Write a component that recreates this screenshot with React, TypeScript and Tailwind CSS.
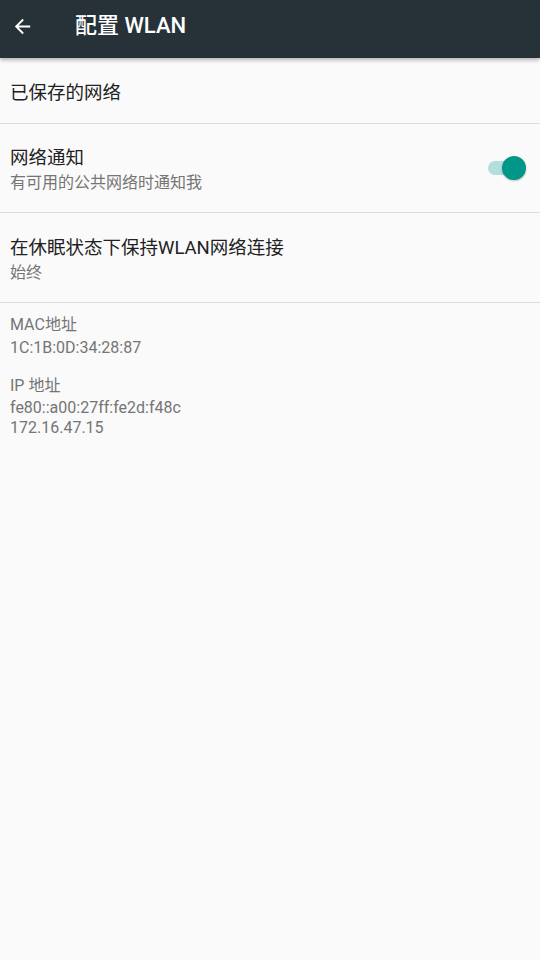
import React from "react";

const font = { fontFamily: '"Roboto", "Noto Sans CJK SC", sans-serif' };

export default function App() {
  return (
    <div className="w-[540px] h-[960px] bg-[#fafafa] flex flex-col" style={font}>
      <div className="h-[58px] bg-[#263238] flex items-center pb-[6px] shadow-[0_2px_4px_rgba(0,0,0,0.3)] relative z-10">
        <div className="w-[75px] flex items-center pl-[11px]">
          <svg width="23" height="23" viewBox="0 0 24 24">
            <path d="M20 11H7.83l5.59-5.59L12 4l-8 8 8 8 1.41-1.41L7.83 13H20v-2z" fill="#ffffff" />
          </svg>
        </div>
        <div className="text-white text-[22px] font-medium leading-none">配置 WLAN</div>
      </div>
      <div className="h-[66px] flex items-center px-[10px] border-b border-[#dcdcdc]">
        <div className="text-[18.5px] text-[#212121] pt-[6px]">已保存的网络</div>
      </div>
      <div className="h-[89px] flex items-center justify-between pl-[10px] pr-[16px] border-b border-[#dcdcdc]">
        <div className="flex flex-col pt-[4px]">
          <div className="text-[18.5px] leading-[26px] text-[#212121]">网络通知</div>
          <div className="text-[16px] leading-[24px] text-[#757575]">有可用的公共网络时通知我</div>
        </div>
        <div className="relative w-[36px] h-[24px] flex items-center">
          <div className="w-[33px] h-[14px] rounded-full bg-[#b2dfdb]" />
          <div className="absolute right-[-2px] top-[0px] w-[24px] h-[24px] rounded-full bg-[#009688] shadow-[0_1px_2px_rgba(0,0,0,0.25)]" />
        </div>
      </div>
      <div className="h-[90px] flex items-center px-[10px] border-b border-[#dcdcdc]">
        <div className="flex flex-col pt-[4px]">
          <div className="text-[18.5px] leading-[26px] text-[#212121]">在休眠状态下保持WLAN网络连接</div>
          <div className="text-[16px] leading-[24px] text-[#757575]">始终</div>
        </div>
      </div>
      <div className="flex flex-col px-[10px] pt-[11px] text-[16px] leading-[21px] text-[#757575]">
        <div>MAC地址</div>
        <div className="mt-[2px]">1C:1B:0D:34:28:87</div>
        <div className="mt-[17px]">IP 地址</div>
        <div className="mt-[2px] leading-[20px]">fe80::a00:27ff:fe2d:f48c</div>
        <div className="leading-[20px]">172.16.47.15</div>
      </div>
    </div>
  );
}
